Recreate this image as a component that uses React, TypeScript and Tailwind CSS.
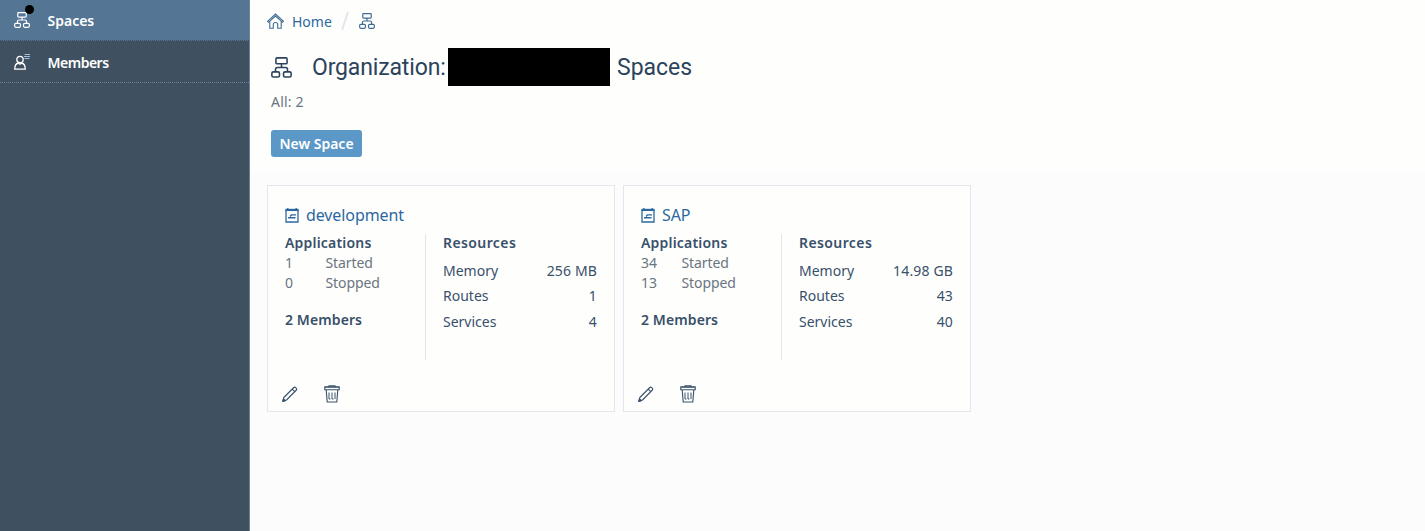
import type { ReactNode } from 'react';

type IconProps = { className?: string };

function OrgIcon({ className }: IconProps) {
  return (
    <svg viewBox="0 0 20 20" fill="none" stroke="currentColor" strokeWidth="1.5" className={className}>
      <rect x="4.7" y="0.8" width="10.6" height="5.6" rx="1" />
      <path d="M10 6.3v3.7M4.3 14.2v-2.4c0-1.2.6-1.8 1.8-1.8h7.8c1.2 0 1.8.6 1.8 1.8v2.4" />
      <rect x="0.8" y="14.2" width="7.3" height="4.9" rx="1.5" />
      <rect x="11.9" y="14.2" width="7.3" height="4.9" rx="1.5" />
    </svg>
  );
}

function MemberIcon({ className }: IconProps) {
  return (
    <svg viewBox="0 0 16 16" fill="none" stroke="currentColor" strokeWidth="1.3" className={className}>
      <circle cx="6" cy="5.5" r="3.2" />
      <path d="M0.7 15.2c0-3.6 1.3-5.6 3.6-6.2L6 10.3 7.7 9c2.3.6 3.6 2.6 3.6 6.2z" />
      <path d="M10.5 .5h5.5M10 2.5h6M10.5 4.5h5" stroke="#9fc0e0" strokeWidth="1" />
    </svg>
  );
}

function HomeIcon({ className }: IconProps) {
  return (
    <svg viewBox="0 0 17 16" fill="none" stroke="currentColor" strokeWidth="1.1" className={className}>
      <path d="M0.5 8.3 8.5 1l8 7.3-1 1-7-6.3-7 6.3z" />
      <path d="M2.8 8.5v6.7h3.5v-3.7c0-2.6 4.4-2.6 4.4 0v3.7h3.5V8.5" />
    </svg>
  );
}

function SpaceIcon({ className }: IconProps) {
  return (
    <svg viewBox="0 0 14 15" fill="none" stroke="currentColor" className={className}>
      <path d="M1 2v12h12V2" strokeWidth="1.3" />
      <path d="M0.4 1.9h13.2" strokeWidth="2.2" />
      <path d="M2.8 0v3M11.2 0v3" strokeWidth="1.3" />
      <path d="M6 6.9h5M3 9.8h7.5M5 8.4l1.5-1.5" strokeWidth="1.4" />
    </svg>
  );
}

function PencilIcon({ className }: IconProps) {
  return (
    <svg viewBox="0 0 16 16" fill="none" stroke="currentColor" strokeWidth="1.1" strokeLinejoin="round" className={className}>
      <path d="M1.8 11.5 11.8 1.5c1.2-1.2 3.6 1.2 2.6 2.5L4.5 14 1 15.2zM10.2 3.1l2.7 2.7" />
      <path d="M0.7 15.4l.8-2.6 1.9 1.8z" fill="currentColor" />
    </svg>
  );
}

function TrashIcon({ className }: IconProps) {
  return (
    <svg viewBox="0 0 16 18" fill="none" stroke="currentColor" strokeWidth="1.1" className={className}>
      <path d="M5 2V.8h6V2M.8 2.3v2.4h14.4V2.3M2.2 5l1 12h9.6l1-12" />
      <path d="M.3 2h15.4" strokeWidth="1.6" />
      <path d="M5 7.5v6.500h1.500M8 7.500v6.500h1.500M11 7.500v6.500" strokeWidth="1" />
    </svg>
  );
}

function NavItem({ icon, label, className }: { icon: ReactNode; label: string; className: string }) {
  return (
    <a className={`flex items-center border-b border-dotted pl-[14px] text-[14px] font-semibold text-white ${className}`}>
      <span className="relative mr-[17.5px] w-4">{icon}</span>
      {label}
    </a>
  );
}

type Space = {
  name: string;
  started: number;
  stopped: number;
  resources: [string, string][];
};

const spaces: Space[] = [
  { name: 'development', started: 1, stopped: 0, resources: [['Memory', '256 MB'], ['Routes', '1'], ['Services', '4']] },
  { name: 'SAP', started: 34, stopped: 13, resources: [['Memory', '14.98 GB'], ['Routes', '43'], ['Services', '40']] },
];

function SpaceCard({ space }: { space: Space }) {
  return (
    <article className="flex h-[227px] w-[348px] flex-col border border-[#e2e7ec] bg-[#fefefd] pt-[18px] pl-[17px] text-[14px] text-[#38506a]">
      <h2 className="-ml-[0.5px] flex h-[22px] items-center text-[16px] tracking-[-0.1px] text-[#2c689f]">
        <SpaceIcon className="mr-[7.5px] h-[15px] w-[14px]" />
        {space.name}
      </h2>
      <div className="mt-[8px] flex h-[126px]">
        <div className="w-[141px] border-r border-[#e2e7ec]">
          <h3 className="h-[18px] leading-[18px] font-semibold tracking-[0.2px]">Applications</h3>
          <dl className="grid grid-cols-[40.5px_auto] pt-px leading-[20px] tracking-[-0.1px] text-[#6a7580]">
            <dt>{space.started}</dt>
            <dd>Started</dd>
            <dt>{space.stopped}</dt>
            <dd>Stopped</dd>
          </dl>
          <p className="mt-[17px] leading-[20px] font-semibold tracking-[0.1px]">2 Members</p>
        </div>
        <div className="ml-[17px] w-[154px]">
          <h3 className="mb-[6px] h-[18px] leading-[18px] font-semibold tracking-[0.4px]">Resources</h3>
          {space.resources.map(([label, value]) => (
            <div key={label} className="flex justify-between leading-[25.3px]">
              <span>{label}</span>
              <span className="tracking-[0.15px]">{value}</span>
            </div>
          ))}
        </div>
      </div>
      <div className="-ml-[3.5px] mt-[25px] flex items-center gap-[26px] text-[#38506a]">
        <PencilIcon className="h-4 w-4" />
        <TrashIcon className="h-[18px] w-4" />
      </div>
    </article>
  );
}

export default function App() {
  return (
    <div className="flex h-[531px] w-[1425px] overflow-hidden bg-[#fcfcfc] font-['Noto_Sans',sans-serif]">
      <aside className="w-[250px] shrink-0 border-r border-[#6d8299] bg-[#3f5161]">
        <NavItem
          className="h-[41px] border-[#3f5161] bg-[#557594]"
          label="Spaces"
          icon={
            <>
              <OrgIcon className="h-4 w-4" />
              <span className="absolute -top-[7px] left-[11px] h-[9px] w-[9px] rounded-full bg-black" />
            </>
          }
        />
        <NavItem
          className="h-[42px] border-[#6484a3] pt-px tracking-[-0.5px]"
          label="Members"
          icon={<MemberIcon className="h-4 w-4" />}
        />
      </aside>
      <main className="flex-1">
        <header className="h-[172px] bg-[#fefefd] pl-[21px]">
          <nav className="-ml-[4px] flex h-[42px] items-center text-[14px] text-[#2c689f]">
            <HomeIcon className="mr-[8px] h-4 w-[17px] text-[#3f6c96]" />
            <span className="w-[39px]">Home</span>
            <svg viewBox="0 0 8 20" className="mr-[10px] ml-[10px] h-5 w-2 text-[#e2e7ec]">
              <path d="M7 1 1 19" stroke="currentColor" strokeWidth="2" />
            </svg>
            <OrgIcon className="h-4 w-4 text-[#3f6c96]" />
          </nav>
          <h1 className="flex h-[50px] items-center font-['Roboto',sans-serif] text-[23px] text-[#2b435b]">
            <OrgIcon className="mr-[20px] h-[21px] w-[21px]" />
            <span className="w-[136px] pt-[2px] tracking-[-0.15px] whitespace-nowrap">Organization:</span>
            <span className="mr-[7px] h-[38px] w-[162px] bg-black" />
            <span className="pt-[2px]">Spaces</span>
          </h1>
          <p className="h-[20px] text-[14px] leading-[19px] tracking-[0.2px] text-[#6a7580]">All: 2</p>
          <button className="mt-[18px] block h-[27px] w-[91px] rounded-[3px] bg-[#5b97c7] text-[14px] font-semibold whitespace-nowrap text-white">
            New Space
          </button>
        </header>
        <section className="flex gap-[8px] pt-[13px] pl-[17px]">
          {spaces.map((space) => (
            <SpaceCard key={space.name} space={space} />
          ))}
        </section>
      </main>
    </div>
  );
}
